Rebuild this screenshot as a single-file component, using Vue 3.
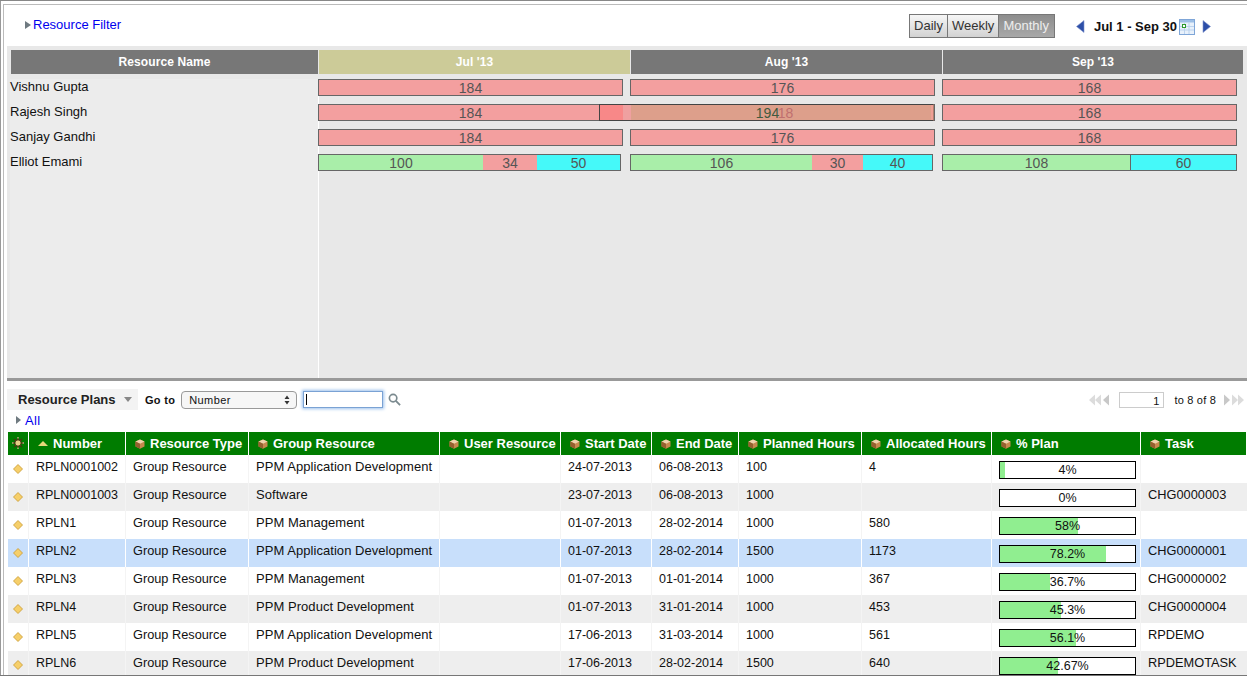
<script setup>
const bars = [
  { name: 'Vishnu Gupta', months: [[{ w: 303, c: 'red', t: '184' }], [{ w: 303, c: 'red', t: '176' }], [{ w: 293, c: 'red', t: '168' }]] },
  { name: 'Rajesh Singh', months: [[{ w: 303, c: 'red', t: '184' }], [{ w: 303, c: 'mix', t: '18' }], [{ w: 293, c: 'red', t: '168' }]], over: true },
  { name: 'Sanjay Gandhi', months: [[{ w: 303, c: 'red', t: '184' }], [{ w: 303, c: 'red', t: '176' }], [{ w: 293, c: 'red', t: '168' }]] },
  { name: 'Elliot Emami', months: [
    [{ w: 164, c: 'green', t: '100' }, { w: 54, c: 'red', t: '34' }, { w: 83, c: 'cyan', t: '50' }],
    [{ w: 181, c: 'green', t: '106' }, { w: 51, c: 'red', t: '30' }, { w: 69, c: 'cyan', t: '40' }],
    [{ w: 187, c: 'green', t: '108' }, { w: 106, c: 'cyan line', t: '60' }]
  ] }
]
const columns = [
  { t: 'Resource Type', w: 123 }, { t: 'Group Resource', w: 191 }, { t: 'User Resource', w: 121 },
  { t: 'Start Date', w: 91 }, { t: 'End Date', w: 87 }, { t: 'Planned Hours', w: 123 },
  { t: 'Allocated Hours', w: 130 }, { t: '% Plan', w: 149 }, { t: 'Task', w: 106 }
]
const rows = [
  ['RPLN0001002', 'Group Resource', 'PPM Application Development', '24-07-2013', '06-08-2013', '100', '4', 4, '4%', ''],
  ['RPLN0001003', 'Group Resource', 'Software', '23-07-2013', '06-08-2013', '1000', '', 0, '0%', 'CHG0000003'],
  ['RPLN1', 'Group Resource', 'PPM Management', '01-07-2013', '28-02-2014', '1000', '580', 58, '58%', ''],
  ['RPLN2', 'Group Resource', 'PPM Application Development', '01-07-2013', '28-02-2014', '1500', '1173', 78.2, '78.2%', 'CHG0000001'],
  ['RPLN3', 'Group Resource', 'PPM Management', '01-07-2013', '01-01-2014', '1000', '367', 36.7, '36.7%', 'CHG0000002'],
  ['RPLN4', 'Group Resource', 'PPM Product Development', '01-07-2013', '31-01-2014', '1000', '453', 45.3, '45.3%', 'CHG0000004'],
  ['RPLN5', 'Group Resource', 'PPM Application Development', '17-06-2013', '31-03-2014', '1000', '561', 56.1, '56.1%', 'RPDEMO'],
  ['RPLN6', 'Group Resource', 'PPM Product Development', '17-06-2013', '28-02-2014', '1500', '640', 42.67, '42.67%', 'RPDEMOTASK']
]
</script>

<template>
  <div class="page">
    <header class="topbar">
      <a class="filter"><i class="tri"></i>Resource Filter</a>
      <div class="views">
        <span class="view">Daily</span><span class="view">Weekly</span><span class="view on">Monthly</span>
      </div>
      <div class="range">
        <svg class="nav" viewBox="0 0 9 13" width="9" height="13"><path d="M8 0.5V12.5L0.5 6.5Z" fill="#2d4fa8" stroke="#7f93cc" stroke-width=".6"/></svg>
        <b>Jul 1 - Sep 30</b>
        <svg class="cal" viewBox="0 0 16 16" width="16" height="16">
          <rect x=".5" y=".5" width="15" height="15" fill="#e8f1fb" stroke="#7fa6d8"/>
          <rect x="1" y="1" width="14" height="2.5" fill="#9dbfe6"/>
          <path d="M1 7.5H15M1 11H15M5.5 4V15M10 4V15" stroke="#bcd3ee" stroke-width="1"/>
          <rect x="3.5" y="5.5" width="3" height="3" fill="#fff" stroke="#2c9a2c"/>
        </svg>
        <svg class="nav" viewBox="0 0 9 13" width="9" height="13"><path d="M1 0.5V12.5L8.5 6.5Z" fill="#2d4fa8" stroke="#7f93cc" stroke-width=".6"/></svg>
      </div>
    </header>

    <section class="gantt">
      <div class="ghead">
        <div class="gh name">Resource Name</div>
        <div class="gh jul">Jul '13</div>
        <div class="gh aug">Aug '13</div>
        <div class="gh sep">Sep '13</div>
      </div>
      <div class="gbody">
        <div class="names">
          <div v-for="b in bars" :key="b.name" class="rname">{{ b.name }}</div>
        </div>
        <div class="chart">
          <div v-for="b in bars" :key="b.name" class="grow">
            <div v-for="(m, i) in b.months" :key="i" class="track" :class="'m' + i">
              <div class="bar">
                <span v-for="(s, j) in m" :key="j" class="seg" :class="s.c" :style="{ width: s.w + 'px' }">{{ s.t }}</span>
              </div>
            </div>
            <div v-if="b.over" class="over"><span class="over-t">194</span></div>
          </div>
        </div>
      </div>
    </section>

    <section class="plans">
      <div class="tools">
        <div class="title">Resource Plans<i class="caret"></i></div>
        <span class="goto">Go to</span>
        <div class="select">Number<svg viewBox="0 0 6 10" width="6" height="10"><path d="M3 .5L5.5 4H.5ZM3 9.5L.5 6H5.5Z" fill="#333"/></svg></div>
        <div class="search"><i class="caretline"></i></div>
        <svg class="lens" viewBox="0 0 14 14" width="13" height="13"><circle cx="5.5" cy="5.5" r="4" fill="none" stroke="#7b8a8f" stroke-width="1.8"/><path d="M8.5 8.5L13 13" stroke="#7b8a8f" stroke-width="2"/></svg>
        <div class="pager">
          <svg viewBox="0 0 22 12" width="22" height="12"><path d="M7 .5V11.5L1 6ZM13 .5V11.5L7 6Z" fill="#dcdcdc"/><path d="M21 .5V11.5L15 6Z" fill="#c8c8c8"/></svg>
          <span class="pageno">1</span>
          <span class="of">to 8 of 8</span>
          <svg viewBox="0 0 22 12" width="22" height="12"><path d="M1 .5V11.5L7 6Z" fill="#c8c8c8"/><path d="M9 .5V11.5L15 6ZM15 .5V11.5L21 6Z" fill="#dcdcdc"/></svg>
        </div>
      </div>
      <a class="all"><i class="tri small"></i>All</a>
      <table class="grid">
        <colgroup>
          <col style="width:21px" /><col style="width:97px" />
          <col v-for="c in columns" :key="c.t" :style="{ width: c.w + 'px' }" />
        </colgroup>
        <thead>
          <tr>
            <th class="ic">
              <svg viewBox="0 0 12 12" width="12" height="12"><path d="M6 .5V11.5M.5 6H11.5M2 2L10 10M10 2L2 10" stroke="#4a3410" stroke-width="1.4"/><path d="M6 0V1.5M6 10.5V12M0 6H1.5M10.5 6H12" stroke="#f2e6b0" stroke-width="1"/><circle cx="6" cy="6" r="3.2" fill="#e6cf86" stroke="#3a2a08"/></svg>
            </th>
            <th><i class="sort"></i>Number</th>
            <th v-for="c in columns" :key="c.t">
              <svg class="cube" viewBox="0 0 10 10" width="10" height="10"><path d="M5 .5L9.5 2.6V7.6L5 9.7L.5 7.6V2.6Z" fill="#c68a4e"/><path d="M5 .5L9.5 2.6L5 4.8L.5 2.6Z" fill="#eed3ac"/><path d="M5 4.8V9.7L.5 7.6V2.6Z" fill="#94602f"/></svg>{{ c.t }}
            </th>
          </tr>
        </thead>
        <tbody>
          <tr v-for="(r, i) in rows" :key="r[0]" :class="{ odd: i % 2 === 1, sel: i === 3 }">
            <td class="ic">
              <svg class="diamond" viewBox="0 0 10 10" width="10" height="10"><path d="M5 .5L9.5 5L5 9.5L.5 5Z" fill="#f6cf6a" stroke="#c99a2e" stroke-width=".8"/></svg>
            </td>
            <td>{{ r[0] }}</td>
            <td>{{ r[1] }}</td>
            <td>{{ r[2] }}</td>
            <td></td>
            <td>{{ r[3] }}</td>
            <td>{{ r[4] }}</td>
            <td>{{ r[5] }}</td>
            <td>{{ r[6] }}</td>
            <td class="pc">
              <div class="prog"><div class="fill" :style="{ width: r[7] + '%' }"></div><span>{{ r[8] }}</span></div>
            </td>
            <td>{{ r[9] }}</td>
          </tr>
        </tbody>
      </table>
    </section>
  </div>
</template>

<style>
html, body { margin: 0; padding: 0; overflow: hidden; background: #fff; }
</style>

<style scoped>
.page {
  width: 1247px; height: 676px; box-sizing: border-box; overflow: hidden;
  display: flex; flex-direction: column; background: #fff;
  font-family: "Liberation Sans", Arial, sans-serif; font-size: 13px; color: #111;
  border-top: 1px solid #888; border-bottom: 1px solid #777; padding-top: 3px; padding-left: 3px;
  position: relative;
}
.page::before { content: ""; position: absolute; left: 0; top: 0; bottom: 0; width: 1px; background: #999; }
.page::after { content: ""; position: absolute; left: 3px; top: 3px; right: 0; bottom: 0; border-left: 1px solid #bbb; border-top: 1px solid #bbb; pointer-events: none; }

.topbar { height: 42px; flex: none; display: flex; align-items: flex-start; padding-left: 22px; box-sizing: border-box; }
.filter { color: #0000ee; display: flex; align-items: center; margin-top: 13px; line-height: 16px; }
.tri { display: inline-block; width: 0; height: 0; border-left: 6px solid #6f7a80; border-top: 4px solid transparent; border-bottom: 4px solid transparent; margin-right: 2px; }
.views { margin-left: auto; margin-top: 10px; display: flex; border: 1px solid #777; height: 24px; box-sizing: border-box; }
.view { padding: 0 4px; line-height: 22px; font-size: 13px; color: #333; background: linear-gradient(#f6f6f6, #d2d2d2); border-right: 1px solid #777; }
.view:last-child { border-right: 0; }
.view.on { background: linear-gradient(#8d8d8d, #a8a8a8); color: #eee; padding-right: 5px; }
.range { display: flex; align-items: center; margin: 15px 36px 0 21px; height: 15px; font-size: 13px; }
.range b { margin: 0 2px 0 9px; color: #111; }
.cal { margin-right: 7px; }

.gantt { height: 332px; flex: none; margin-left: 4px; background: #e8e8e8; box-sizing: border-box; padding: 4px 4px 0; display: flex; flex-direction: column; }
.ghead { display: flex; height: 24px; flex: none; }
.gh { background: #777; color: #fff; font-weight: bold; font-size: 12px; letter-spacing: .1px; text-align: center; line-height: 24px; margin-right: 1px; }
.gh.name { width: 307px; }
.gh.jul { width: 311px; background: #cccb98; }
.gh.aug { width: 311px; }
.gh.sep { width: 300px; margin-right: 0; }
.gbody { flex: 1; display: flex; margin-top: 5px; }
.names { width: 309px; flex: none; margin-left: -1px; margin-right: -1px; box-sizing: border-box; background: #ececec; border-right: 1px solid #fff; }
.rname { height: 25px; line-height: 16px; box-sizing: border-box; }
.chart { flex: 1; position: relative; }
.grow { display: flex; height: 25px; position: relative; }
.track { width: 312px; flex: none; }
.track.m2 { width: 296px; }
.bar { display: flex; height: 15px; width: max-content; border: 1px solid #666; box-sizing: content-box; }
.seg { display: block; box-sizing: border-box; text-align: center; font-size: 14px; line-height: 16px; height: 15px; color: #555; overflow: hidden; }
.seg.red { background: #f39f9f; }
.seg.green { background: #a9eea9; }
.seg.cyan { background: #45f9f9; }
.seg.line { border-left: 1px solid #666; }
.seg.mix { background: linear-gradient(to right, #dd9f8b 300px, #ef9f95 300px); color: #c06f6f; padding-left: 6px; }
.over { position: absolute; left: 281px; top: 0; width: 331px; height: 15px; border: 1px solid #444; border-right-color: #b08070; text-align: center; padding-left: 2px; box-sizing: content-box; pointer-events: none; }
.over-t { position: relative; font-size: 14px; line-height: 16px; display: block; color: #3f5a3f; }
.over::before { content: ""; position: absolute; left: 0; top: 0; width: 23px; height: 15px; background: #f88888; }
.over::after { content: ""; position: absolute; left: 23px; top: 0; width: 8px; height: 15px; background: #efa0a0; }

.plans { flex: 1; min-height: 0; margin-left: 4px; border-top: 3px solid #999; }
.tools { display: flex; align-items: center; height: 32px; box-sizing: border-box; padding-top: 5px; flex: none; }
.title { width: 131px; height: 21px; box-sizing: border-box; background: #f3f3f3; font-weight: bold; font-size: 13px; line-height: 21px; padding-left: 11px; display: flex; align-items: center; color: #222; }
.caret { width: 0; height: 0; border-top: 5px solid #888; border-left: 4px solid transparent; border-right: 4px solid transparent; margin-left: 8px; }
.goto { font-size: 11px; font-weight: bold; margin-left: 7px; letter-spacing: .3px; }
.select { margin-left: 6px; width: 116px; height: 18px; box-sizing: border-box; border: 1px solid #999; border-radius: 4px; background: #f6f6f6; font-size: 11px; letter-spacing: .4px; padding: 0 6px 0 7px; display: flex; align-items: center; justify-content: space-between; }
.search { margin-left: 6px; width: 80px; height: 17px; box-sizing: border-box; border: 1px solid #7aa2d4; box-shadow: 0 0 3px 1px #9cc1ec; background: #fff; padding: 2px 2px; }
.caretline { display: block; width: 1px; height: 11px; background: #000; }
.lens { margin-left: 5px; }
.pager { margin-left: auto; margin-right: 2px; display: flex; align-items: center; }
.pageno { width: 45px; height: 16px; box-sizing: border-box; border: 1px solid #ccc; font-size: 11px; text-align: right; line-height: 16px; padding-right: 4px; margin: 0 10px 0 9px; }
.of { font-size: 11px; margin-right: 7px; letter-spacing: .2px; }
.all { display: flex; align-items: center; height: 14px; margin-left: 9px; color: #0000ee; font-size: 13px; letter-spacing: .4px; }
.tri.small { border-left-width: 5px; margin-right: 4px; }

.grid { border-collapse: separate; border-spacing: 0; table-layout: fixed; width: 1239px; margin-top: 5px; margin-left: 1px; font-size: 12.5px; }
.grid th { height: 23px; padding: 0 0 0 9px; box-sizing: border-box; background: #007c00; color: #fff; font-size: 13px; font-weight: bold; text-align: left; border-right: 1px solid #fff; white-space: nowrap; overflow: hidden; }
.grid th.ic { padding: 0; text-align: center; }
.grid th svg { vertical-align: -1px; }
.cube { margin-right: 5px; }
.sort { display: inline-block; width: 0; height: 0; border-bottom: 5px solid #e7d77a; border-left: 5px solid transparent; border-right: 5px solid transparent; margin-right: 5px; vertical-align: 2px; }
.grid td { height: 28px; padding: 5px 0 0 7px; box-sizing: border-box; vertical-align: top; line-height: 15px; border-right: 1px solid #f4f4f4; white-space: nowrap; overflow: hidden; color: #111; }
.grid td:nth-child(3) { font-size: 12.75px; padding-top: 4px; }
.grid td:nth-child(4) { font-size: 13px; letter-spacing: .05px; padding-top: 4px; }
.grid td:last-child { font-size: 12.8px; border-right: 0; padding-top: 4px; }
.grid tr.odd td { background: #eeeeee; }
.grid tr.sel td { background: #c8dffb; border-right-color: #fff; }
.grid td.ic { padding: 8px 0 0; text-align: center; }
.diamond { display: inline-block; }
.grid td.pc { padding: 6px 0 0 7px; }
.prog { position: relative; width: 135px; height: 16px; border: 1px solid #000; background: #fff; text-align: center; line-height: 16px; font-size: 12.5px; overflow: hidden; }
.fill { position: absolute; left: 0; top: 0; bottom: 0; background: #90ee90; }
.prog span { position: relative; }
</style>
